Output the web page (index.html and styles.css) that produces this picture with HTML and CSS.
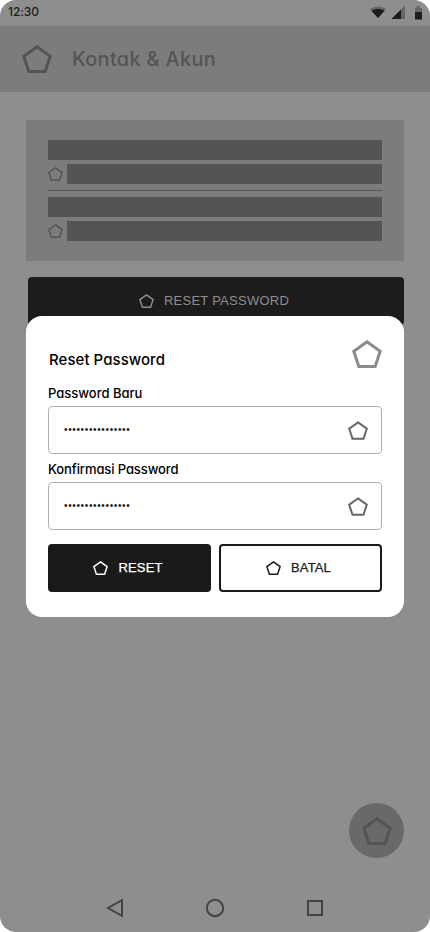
FILE: index.html
```html
<!DOCTYPE html>
<html lang="id">
<head>
<meta charset="utf-8">
<title>Kontak &amp; Akun</title>
<link rel="stylesheet" href="styles.css">
</head>
<body>
<svg class="defs" width="0" height="0" aria-hidden="true">
  <symbol id="pentagon" viewBox="0 0 30 28">
    <path d="M15 1.8 28.2 11.3 23.2 26.5H6.8L1.8 11.3Z" fill="none" stroke="currentColor" stroke-width="3"/>
  </symbol>
</svg>
<div class="screen">
  <div class="status">
    <span class="time">12:30</span>
    <svg class="status-icons" width="52" height="16" viewBox="0 0 52 16">
      <path d="M0 4.2C4.6.6 11.4.6 16 4.2L8 13Z" fill="#666"/>
      <path d="M1.4 5.800C5.4 3.5 10.6 3.5 14.6 5.800L8 13Z" fill="#1c1c1c"/>
      <path d="M21.5 14 35 .5V14Z" fill="#666"/>
      <path d="M21.500 14 31 4.500V14Z" fill="#1c1c1c"/>
      <path d="M45 3h1.700V1h3.300v2h2v5h-7Z" fill="#666"/>
      <path d="M45 7h7v7.500h-7Z" fill="#1c1c1c"/>
    </svg>
  </div>
  <header class="header">
    <svg class="icon-lg"><use href="#pentagon"/></svg>
    <h1 class="title">Kontak &amp; Akun</h1>
  </header>
  <main class="content">
    <section class="card">
      <div class="bar"></div>
      <div class="row"><svg class="icon-sm"><use href="#pentagon"/></svg><div class="bar"></div></div>
      <div class="divider"></div>
      <div class="bar"></div>
      <div class="row"><svg class="icon-sm"><use href="#pentagon"/></svg><div class="bar"></div></div>
    </section>
    <button class="btn wide"><svg class="icon-sm"><use href="#pentagon"/></svg><span>RESET PASSWORD</span></button>
  </main>
  <div class="fab"><svg class="icon-lg"><use href="#pentagon"/></svg></div>
  <nav class="nav">
    <svg width="18" height="20" viewBox="0 0 18 20"><path d="M16 2.200V17.800L2 10Z"/></svg>
    <svg width="20" height="20" viewBox="0 0 20 20"><circle cx="10" cy="10" r="8.200"/></svg>
    <svg width="18" height="18" viewBox="0 0 18 18"><path d="M2 2H16V16H2Z"/></svg>
  </nav>
  <section class="dialog" role="dialog">
    <div class="dialog-head">
      <h2 class="dialog-title">Reset Password</h2>
      <svg class="icon-lg"><use href="#pentagon"/></svg>
    </div>
    <div class="label">Password Baru</div>
    <div class="field"><span class="dots">••••••••••••••••</span><svg class="icon-md"><use href="#pentagon"/></svg></div>
    <div class="label label-confirm">Konfirmasi Password</div>
    <div class="field"><span class="dots">••••••••••••••••</span><svg class="icon-md"><use href="#pentagon"/></svg></div>
    <div class="actions">
      <button class="btn primary"><svg class="icon-sm"><use href="#pentagon"/></svg><span>RESET</span></button>
      <button class="btn outline"><svg class="icon-sm"><use href="#pentagon"/></svg><span>BATAL</span></button>
    </div>
  </section>
</div>
</body>
</html>
```
FILE: styles.css
```css
* { box-sizing: border-box; }
body { margin: 0; background: #fff; font-family: Inter, "Liberation Sans", sans-serif; font-feature-settings: "cv11"; }
h1, h2 { margin: 0; font-weight: 500; }
svg { display: block; flex: none; }
.defs { position: absolute; }
.screen { position: relative; width: 430px; height: 932px; border-radius: 16px; overflow: hidden; background: #8e8e8e; display: flex; flex-direction: column; }
.icon-lg { width: 30px; height: 28px; }
.icon-md { width: 20px; height: 19px; }
.icon-sm { width: 15px; height: 14px; }

.status { height: 26px; display: flex; justify-content: space-between; padding: 4px 8px 0; }
.time { font-size: 12px; line-height: 16px; font-weight: 450; letter-spacing: -.05px; color: #1c1c1c; }
.status-icons { margin-top: 1px; }
.header { height: 66px; background: #7c7c7c; color: #545454; display: flex; align-items: center; gap: 20px; padding: 0 22px; }
.title { font-size: 20px; line-height: 26px; letter-spacing: .28px; }

.content { padding: 28px 26px 0; }
.card { height: 141px; padding: 20px 22px; background: #7c7c7c; color: #545454; }
.bar { height: 20px; flex: 1; background: #545454; }
.row { display: flex; align-items: center; gap: 4px; margin-top: 4px; }
.divider { height: 1px; margin: 6px 0; background: #545454; }
.btn { display: flex; align-items: center; justify-content: center; gap: 10px; height: 48px; padding: 0; border: 0; border-radius: 4px; font: 400 13px/16px "Liberation Sans", sans-serif; letter-spacing: .15px; -webkit-text-stroke: .25px currentColor; }
.wide { width: 376px; margin: 16px 0 0 2px; padding-right: 4px; background: #1c1c1c; color: #8e8e8e; letter-spacing: .25px; -webkit-text-stroke: 0; }
.fab { width: 55px; height: 55px; margin: auto 26px 0 auto; border-radius: 50%; background: #696969; color: #545454; display: flex; align-items: center; justify-content: center; }
.nav { height: 74px; padding: 26px 106px 0; display: flex; justify-content: space-between; align-items: center; }
.nav svg { fill: none; stroke: #434343; stroke-width: 2; }

.dialog { position: absolute; left: 26px; top: 316px; width: 378px; height: 301px; border-radius: 16px; padding: 24px 22px; background: #fff; color: #000; }
.dialog-head { display: flex; justify-content: space-between; height: 44px; color: #8b8b8b; }
.dialog-title { padding: 10px 0 0 1px; font-size: 15px; line-height: 20px; letter-spacing: .05px; color: #000; }
.label { height: 22px; font-size: 13px; line-height: 18px; font-weight: 500; }
.label-confirm { letter-spacing: -.1px; }
.field { height: 48px; margin-bottom: 6px; padding: 0 13px 0 15px; border: 1px solid #b0b0b0; border-radius: 4px; display: flex; align-items: center; justify-content: space-between; color: #666; }
.dots { font: 10px/10px "Liberation Sans", sans-serif; letter-spacing: .65px; color: #1a1a1a; }
.actions { display: grid; grid-template-columns: 1fr 1fr; gap: 8px; margin-top: 14px; }
.primary { background: #1a1a1a; color: #fff; padding-right: 3px; }
.outline { border: 2px solid #1a1a1a; background: #fff; color: #1a1a1a; padding-right: 4px; }
```
